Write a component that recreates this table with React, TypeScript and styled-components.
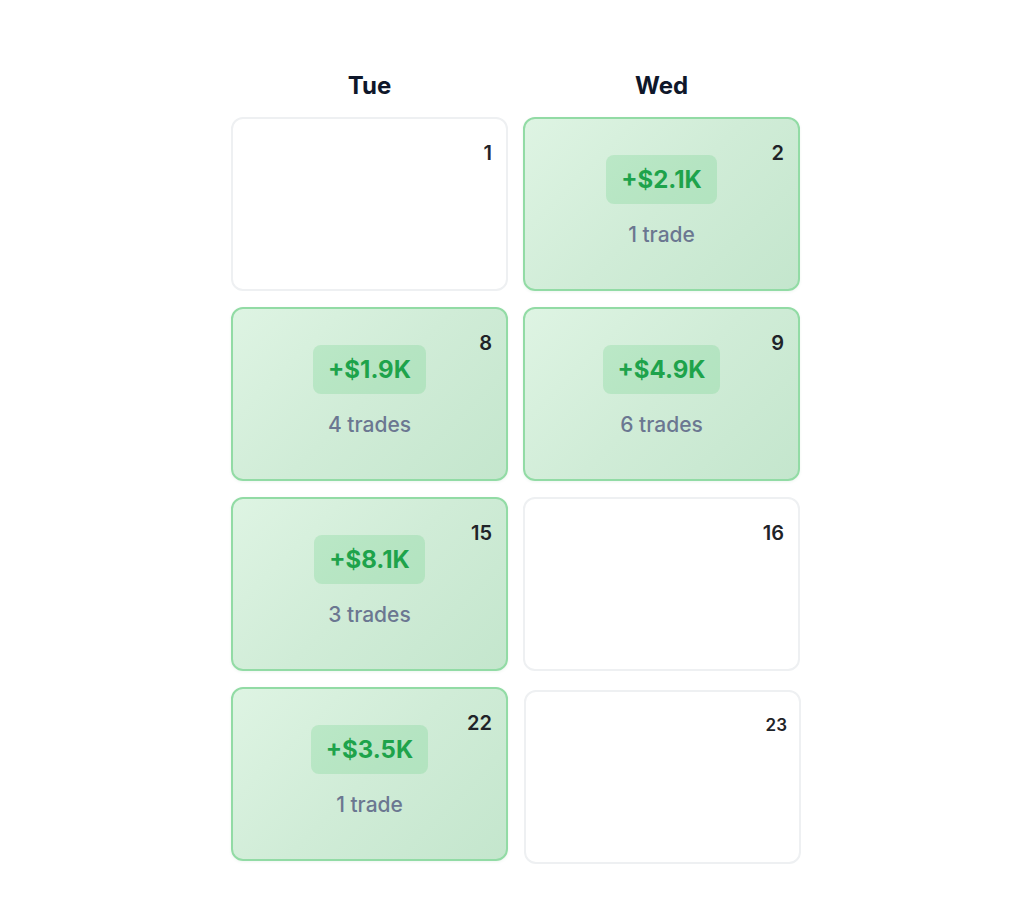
import React from "react";
import styled, { createGlobalStyle, css } from "styled-components";

const Global = createGlobalStyle`
  html, body { margin: 0; padding: 0; background: #ffffff; }
  body { font-family: Inter, "Noto Sans", "Liberation Sans", sans-serif; }
`;

const Page = styled.div`
  width: 1024px;
  height: 904px;
  box-sizing: border-box;
  padding: 70px 0 0 231px;
`;

const Grid = styled.div`
  display: grid;
  grid-template-columns: 277px 277px;
  column-gap: 15px;
  row-gap: 16px;
`;

const HeaderRow = styled.div`
  display: grid;
  grid-template-columns: 277px 277px;
  column-gap: 15px;
  margin-bottom: 15px;
`;

const DayHeader = styled.div`
  height: 32px;
  line-height: 32px;
  text-align: center;
  font-size: 24px;
  font-weight: 700;
  color: #0f172a;
`;

const Cell = styled.div<{ $profit?: boolean; $nudged?: boolean }>`
  position: relative;
  height: 174px;
  box-sizing: border-box;
  border-radius: 12px;
  display: flex;
  flex-direction: column;
  align-items: center;
  justify-content: center;
  padding-bottom: 5px;
  ${(p) =>
    p.$profit
      ? css`
          background: linear-gradient(135deg, #def4e3 0%, #d0ecd7 50%, #c4e6cd 100%);
          border: 2px solid #92dba5;
          box-shadow: 0 1px 3px rgba(34, 120, 60, 0.08);
        `
      : css`
          background: #ffffff;
          border: 2px solid #eef0f2;
        `}
  ${(p) =>
    p.$nudged &&
    css`
      transform: translate(1px, 3px);
    `}
`;

const DayNum = styled.span<{ $small?: boolean }>`
  position: absolute;
  top: 23px;
  right: 14px;
  font-size: ${(p) => (p.$small ? "17px" : "20px")};
  line-height: 22px;
  font-weight: 600;
  color: #1f2328;
  ${(p) =>
    p.$small &&
    css`
      top: 22px;
      right: 12px;
    `}
`;

const Pill = styled.div`
  background: rgba(74, 200, 110, 0.2);
  border-radius: 8px;
  padding: 10px 15px;
  font-size: 24px;
  line-height: 29px;
  font-weight: 700;
  color: #1ea34b;
`;

const Trades = styled.div`
  margin-top: 17px;
  font-size: 21px;
  line-height: 28px;
  font-weight: 500;
  color: #6b7791;
`;

type Day = { n: number; pnl?: string; trades?: number; nudged?: boolean };

const days: Day[] = [
  { n: 1 },
  { n: 2, pnl: "+$2.1K", trades: 1 },
  { n: 8, pnl: "+$1.9K", trades: 4 },
  { n: 9, pnl: "+$4.9K", trades: 6 },
  { n: 15, pnl: "+$8.1K", trades: 3 },
  { n: 16 },
  { n: 22, pnl: "+$3.5K", trades: 1 },
  { n: 23, nudged: true },
];

export default function App() {
  return (
    <>
      <Global />
      <Page>
        <HeaderRow>
          <DayHeader>Tue</DayHeader>
          <DayHeader>Wed</DayHeader>
        </HeaderRow>
        <Grid>
          {days.map((d) => (
            <Cell key={d.n} $profit={!!d.pnl} $nudged={d.nudged}>
              <DayNum $small={d.nudged}>{d.n}</DayNum>
              {d.pnl && (
                <>
                  <Pill>{d.pnl}</Pill>
                  <Trades>
                    {d.trades} {d.trades === 1 ? "trade" : "trades"}
                  </Trades>
                </>
              )}
            </Cell>
          ))}
        </Grid>
      </Page>
    </>
  );
}
